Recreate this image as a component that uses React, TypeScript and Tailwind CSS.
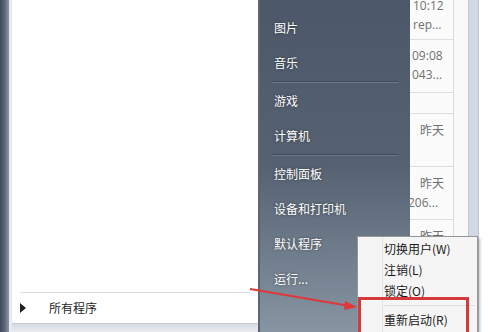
import React from "react";

const font = { fontFamily: '"Noto Sans CJK SC", "Noto Sans", sans-serif' };

function DarkItem({ label }: { label: string }) {
  return (
    <div className="h-[35px] flex items-center pl-[14px] text-[12px] text-white [text-shadow:0_0_3px_rgba(0,0,0,0.5)]">
      {label}
    </div>
  );
}

function DarkSep() {
  return (
    <div className="h-[3px] flex flex-col justify-center px-[12px]">
      <div className="h-px bg-[#3e4856]" />
      <div className="h-px bg-[#6e7a8a]" />
    </div>
  );
}

function MenuItem({ label }: { label: string }) {
  return (
    <div className="h-[21px] flex items-center pl-[26px] text-[12px] text-[#1a1a1a]">{label}</div>
  );
}

export default function App() {
  return (
    <div className="relative w-[497px] h-[332px] overflow-hidden bg-white" style={font}>
      <div className="flex h-full">
        {/* left dark strip */}
        <div className="w-[9px] h-full bg-gradient-to-r from-[#3f4a5a] via-[#5b6678] to-[#8b95a5]" />
        <div className="w-[3px] h-full bg-[#e6eaf0]" />
        {/* white panel */}
        <div className="w-[246px] h-full flex flex-col bg-white">
          <div className="flex-1" />
          <div className="mx-[8px] h-px bg-[#d9dde3]" />
          <div className="h-[30px] flex items-center pl-[8px] text-[12px] text-[#1e1e1e]">
            <svg width="6" height="10" viewBox="0 0 6 10" className="mr-[23px]">
              <path d="M0 0 L6 5 L0 10 Z" fill="#222" />
            </svg>
            所有程序
          </div>
          <div className="h-[9px] bg-gradient-to-b from-[#d5dae2] to-[#e8ebf0] border-t border-[#c9ced6]" />
        </div>
        <div className="w-[2px] h-full bg-[#5d6674]" />
        {/* dark glass panel */}
        <div className="w-[150px] h-full pt-[10px] bg-gradient-to-b from-[#4c5869] via-[#566272] to-[#8795a3]">
          <DarkItem label="图片" />
          <DarkItem label="音乐" />
          <DarkSep />
          <DarkItem label="游戏" />
          <DarkItem label="计算机" />
          <DarkSep />
          <DarkItem label="控制面板" />
          <DarkItem label="设备和打印机" />
          <DarkItem label="默认程序" />
          <DarkItem label="运行..." />
        </div>
        {/* list column */}
        <div className="w-[44px] h-full bg-[#fbfbfb] border-r border-[#dcdcdc] flex flex-col text-[12px] text-[#707070] leading-[19px]" style={{ fontFamily: '"Open Sans", "Noto Sans CJK SC", sans-serif' }}>
          <div className="h-[39px] pl-[3px] -mt-[4px]">
            <div>10:12</div>
            <div>rep...</div>
          </div>
          <div className="h-px bg-[#dedede] mt-[4px]" />
          <div className="h-[52px] pl-[2px] pt-[6px]">
            <div>09:08</div>
            <div>043...</div>
          </div>
          <div className="h-px bg-[#dedede]" />
          <div className="h-[20px]" />
          <div className="h-px bg-[#dedede]" />
          <div className="h-[52px] pl-[10px] pt-[7px]">
            <div>昨天</div>
          </div>
          <div className="h-px bg-[#dedede]" />
          <div className="h-[52px] pt-[7px]">
            <div className="pl-[10px]">昨天</div>
            <div className="-ml-[2px]">206...</div>
          </div>
          <div className="h-px bg-[#dedede]" />
          <div className="pl-[10px] pt-[7px]">昨天</div>
        </div>
        <div className="w-[14px] h-full bg-[#f9f9f9]" />
        <div className="w-[11px] h-full bg-[#d3d9e4] border-x border-[#c2c8d3]" />
        <div className="flex-1 h-full bg-white" />
      </div>

      {/* context menu */}
      <div className="absolute left-[357px] top-[236px] w-[121px] h-[110px] bg-[#f5f5f5] border border-[#979797] shadow-[2px_2px_3px_rgba(0,0,0,0.25)] pt-[1px]">
        <div className="absolute left-[24px] top-0 bottom-0 w-px bg-[#e2e3e3]" />
        <div className="relative">
          <MenuItem label="切换用户(W)" />
          <MenuItem label="注销(L)" />
          <MenuItem label="锁定(O)" />
          <div className="h-[8px] flex items-center pl-[26px] pr-[2px]">
            <div className="h-px w-full bg-[#e0e0e0]" />
          </div>
          <MenuItem label="重新启动(R)" />
        </div>
      </div>

      {/* red highlight box */}
      <div className="absolute left-[358px] top-[297px] w-[111px] h-[50px] border-[3px] border-[#d6393b]" />

      {/* red arrow */}
      <svg className="absolute left-0 top-0 pointer-events-none" width="497" height="332">
        <line x1="250" y1="289" x2="347" y2="305.5" stroke="#e0383a" strokeWidth="2" />
        <path d="M357 307 L345 301 L344 310 Z" fill="#e0383a" />
      </svg>
    </div>
  );
}
